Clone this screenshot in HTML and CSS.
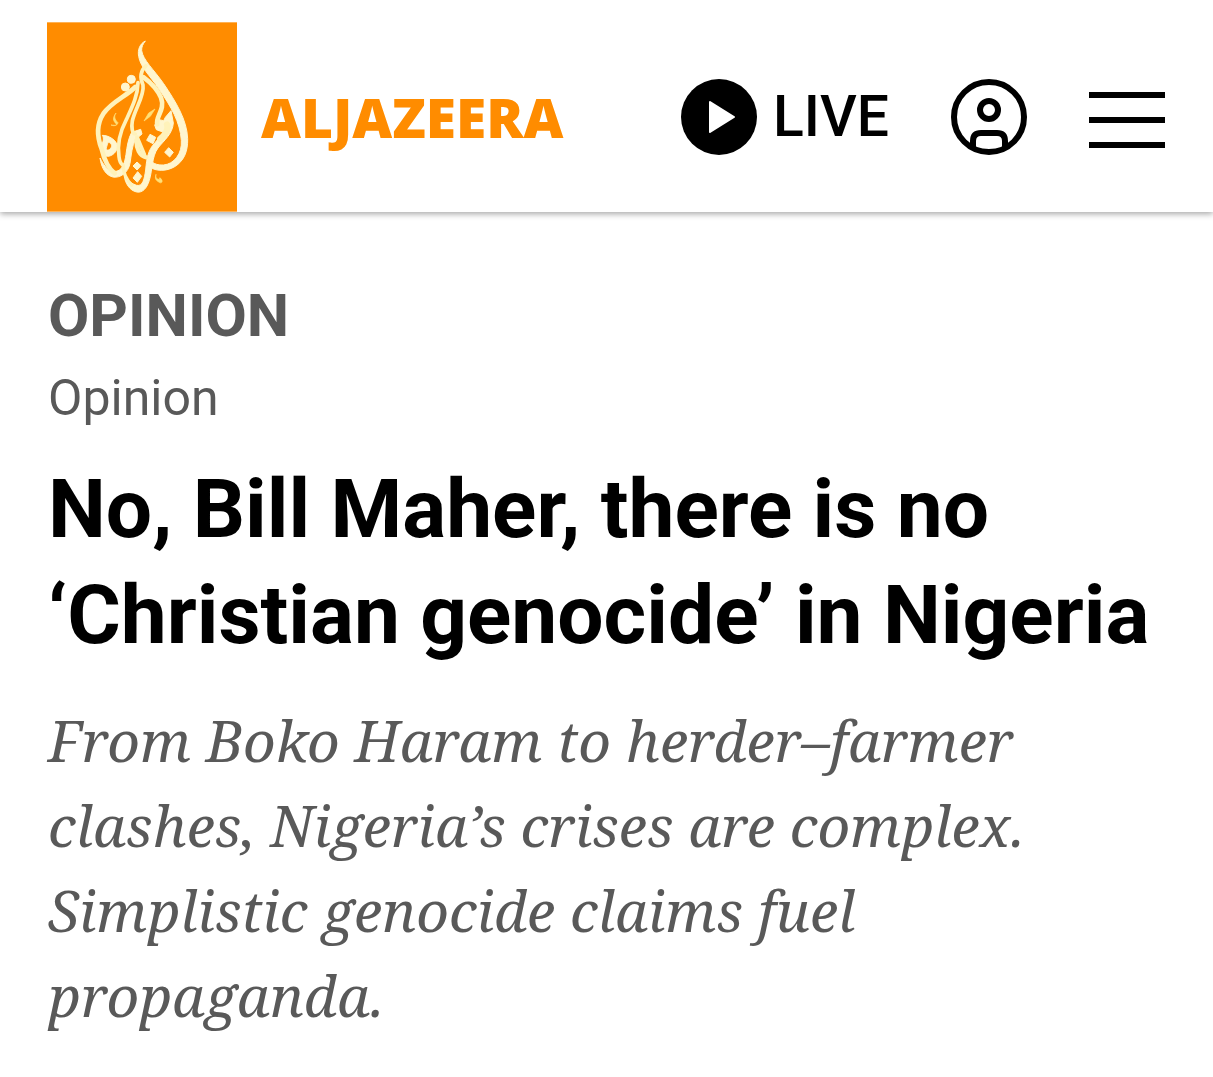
FILE: index.html
```html
<!DOCTYPE html>
<html lang="en">
<head>
    <meta charset="utf-8">
    <meta name="viewport" content="width=device-width, initial-scale=1">
    <title>No, Bill Maher, there is no ‘Christian genocide’ in Nigeria</title>
    <link rel="stylesheet" href="styles.css">
</head>
<body>
    <header class="site-header">
        <a class="brand" href="#">
            <svg class="brand-logo" viewBox="21 37 570 568" aria-hidden="true">
                <rect x="21" y="37" width="570" height="568" fill="#ff8c00"/>
                <g fill="#fff6cf" stroke="#fff6cf" stroke-width="3" stroke-linejoin="round">
                    <path d="M316 93C300 101 292 119 296 139C301 172 331 198 357 237C394 292 420 335 424 391C427 431 402 463 370 465C355 466 344 462 336 456L330 471C346 484 379 485 404 470C432 453 444 424 443 386C441 330 408 276 371 221C341 178 309 150 305 122C304 111 309 102 316 93Z"/>
                    <path d="M376 322L393 302L400 339C398 371 373 390 354 414C335 440 338 478 328 511C320 537 306 549 290 546C269 542 255 519 253 498C264 510 274 522 290 526C309 530 313 506 317 480C320 445 324 420 345 398L371 367L349 359L344 345L357 329L371 332Z"/>
                    <path d="M187 376C207 376 230 391 232 408C232 426 216 439 202 439C187 438 182 423 185 407C188 395 194 387 187 376ZM204 396C203 406 195 417 201 420C207 422 215 414 215 407C214 401 210 398 204 396Z" fill-rule="evenodd"/>
                    <path d="M275 367L302 358L306 372L286 389C276 407 274 436 270 460C265 488 240 505 219 501C198 497 184 474 180 444C190 463 201 483 222 484C246 486 254 461 258 433C261 410 265 385 275 367Z"/>
                    <path d="M320 391L330 373L347 382L339 401ZM374 427L386 413L400 427L389 441ZM279 468L291 456L303 467L291 480ZM279 504L293 485L305 499L292 517Z"/>
                    <circle cx="274" cy="208" r="12"/>
                    <circle cx="256" cy="231" r="12"/>
                </g>
                <path fill="#ffe078" d="M228 309C218 323 217 331 230 343C227 348 220 345 213 345C223 350 233 345 234 338C224 328 221 320 228 309ZM312 333L326 309L345 297L331 319ZM348 493C346 505 351 507 359 509C357 502 360 500 366 511C368 518 362 521 356 516C347 511 344 505 348 493Z" stroke="#ffe078" stroke-width="2"/>
                <g fill="none" stroke="#fff2ba" stroke-width="12" stroke-linecap="round">
                    <path d="M286 231C257 260 215 275 190 311C169 343 170 378 185 417C190 438 198 470 224 490" stroke-width="14"/>
                    <path d="M294 218C293 258 277 290 259 329C240 365 232 407 237 440C238 451 243 462 249 466" stroke-width="11"/>
                    <path d="M318 167C298 186 300 205 309 225C314 257 285 296 277 333C274 350 276 372 286 372" stroke-width="11"/>
                    <path d="M311 202C330 216 352 237 363 263C377 300 345 320 352 343" stroke-width="14"/>
                    <path d="M289 391C289 414 298 438 319 442" stroke-width="13"/>
                    <path d="M291 382L313 434"/>
                    <path d="M250 467C249 485 259 508 275 526" stroke-width="10"/>
                    <path d="M381 344C387 357 375 375 361 387" stroke-width="19"/>
                </g>
            </svg>
            <span class="brand-name">ALJAZEERA</span>
        </a>
        <nav class="header-actions">
            <a class="live" href="#">
                <svg class="icon" viewBox="0 0 76 76" aria-hidden="true">
                    <circle cx="38" cy="38" r="38"/>
                    <path d="M29 23L53 38L29 53Z" fill="#fff" stroke="#fff" stroke-width="2" stroke-linejoin="round"/>
                </svg>
                <span>LIVE</span>
            </a>
            <button class="icon-button account" type="button" aria-label="Account">
                <svg class="icon" viewBox="0 0 76 76" fill="none" stroke="#000" stroke-width="6" aria-hidden="true">
                    <circle cx="38" cy="38" r="35"/>
                    <circle cx="38" cy="31" r="9"/>
                    <path d="M22 70V62Q22 54 30 54H46Q54 54 54 62V70"/>
                </svg>
            </button>
            <button class="icon-button" type="button" aria-label="Menu">
                <svg class="icon" viewBox="0 0 76 76" stroke="#000" stroke-width="6" aria-hidden="true">
                    <path d="M0 16H76M0 41H76M0 66H76"/>
                </svg>
            </button>
        </nav>
    </header>
    <main class="article">
        <p class="section">OPINION</p>
        <a class="topic" href="#">Opinion</a>
        <h1 class="title">No, Bill Maher, there is no ‘Christian genocide’ in Nigeria</h1>
        <p class="summary">From Boko Haram to herder–farmer clashes, Nigeria’s crises are complex. Simplistic genocide claims fuel propaganda.</p>
    </main>
</body>
</html>
```
FILE: styles.css
```css
* {
    box-sizing: border-box;
}
body {
    margin: 0;
    background-color: #fff;
    color: #000;
    font-family: Roboto, Arial, sans-serif;
}
a {
    color: inherit;
    text-decoration: none;
}
.site-header {
    display: flex;
    justify-content: space-between;
    align-items: center;
    padding: 22px 48px 0 47px;
    box-shadow: 0 2px 6px rgba(0, 0, 0, 0.35);
}
.brand {
    display: flex;
    align-items: center;
    gap: 24px;
}
.brand-logo {
    display: block;
    width: 190px;
    height: 190px;
}
.brand-name {
    color: #ff8c00;
    font-family: "Noto Sans", "Open Sans", sans-serif;
    font-size: 55px;
    font-weight: 900;
    line-height: 76px;
}
.header-actions {
    display: flex;
    align-items: center;
}
.live {
    display: flex;
    align-items: center;
    gap: 16px;
    font-size: 57px;
    font-weight: 500;
    line-height: 76px;
}
.icon {
    display: block;
    width: 76px;
    height: 76px;
}
.icon-button {
    margin: 0 0 0 62px;
    padding: 0;
    border: none;
    background: none;
}
.article {
    padding: 68px 48px 32px;
}
.section {
    margin: 0;
    color: #595959;
    font-size: 60px;
    font-weight: 700;
    line-height: 72px;
}
.topic {
    display: block;
    margin-top: 12px;
    color: #595959;
    font-size: 50px;
    line-height: 68px;
}
.title {
    margin: 24px 0 0;
    font-size: 82px;
    font-weight: 700;
    line-height: 106px;
}
.summary {
    margin: 30px 0 0;
    color: #595959;
    font-family: "Noto Serif", "Liberation Serif", serif;
    font-size: 57px;
    font-style: italic;
    line-height: 85px;
}
```
